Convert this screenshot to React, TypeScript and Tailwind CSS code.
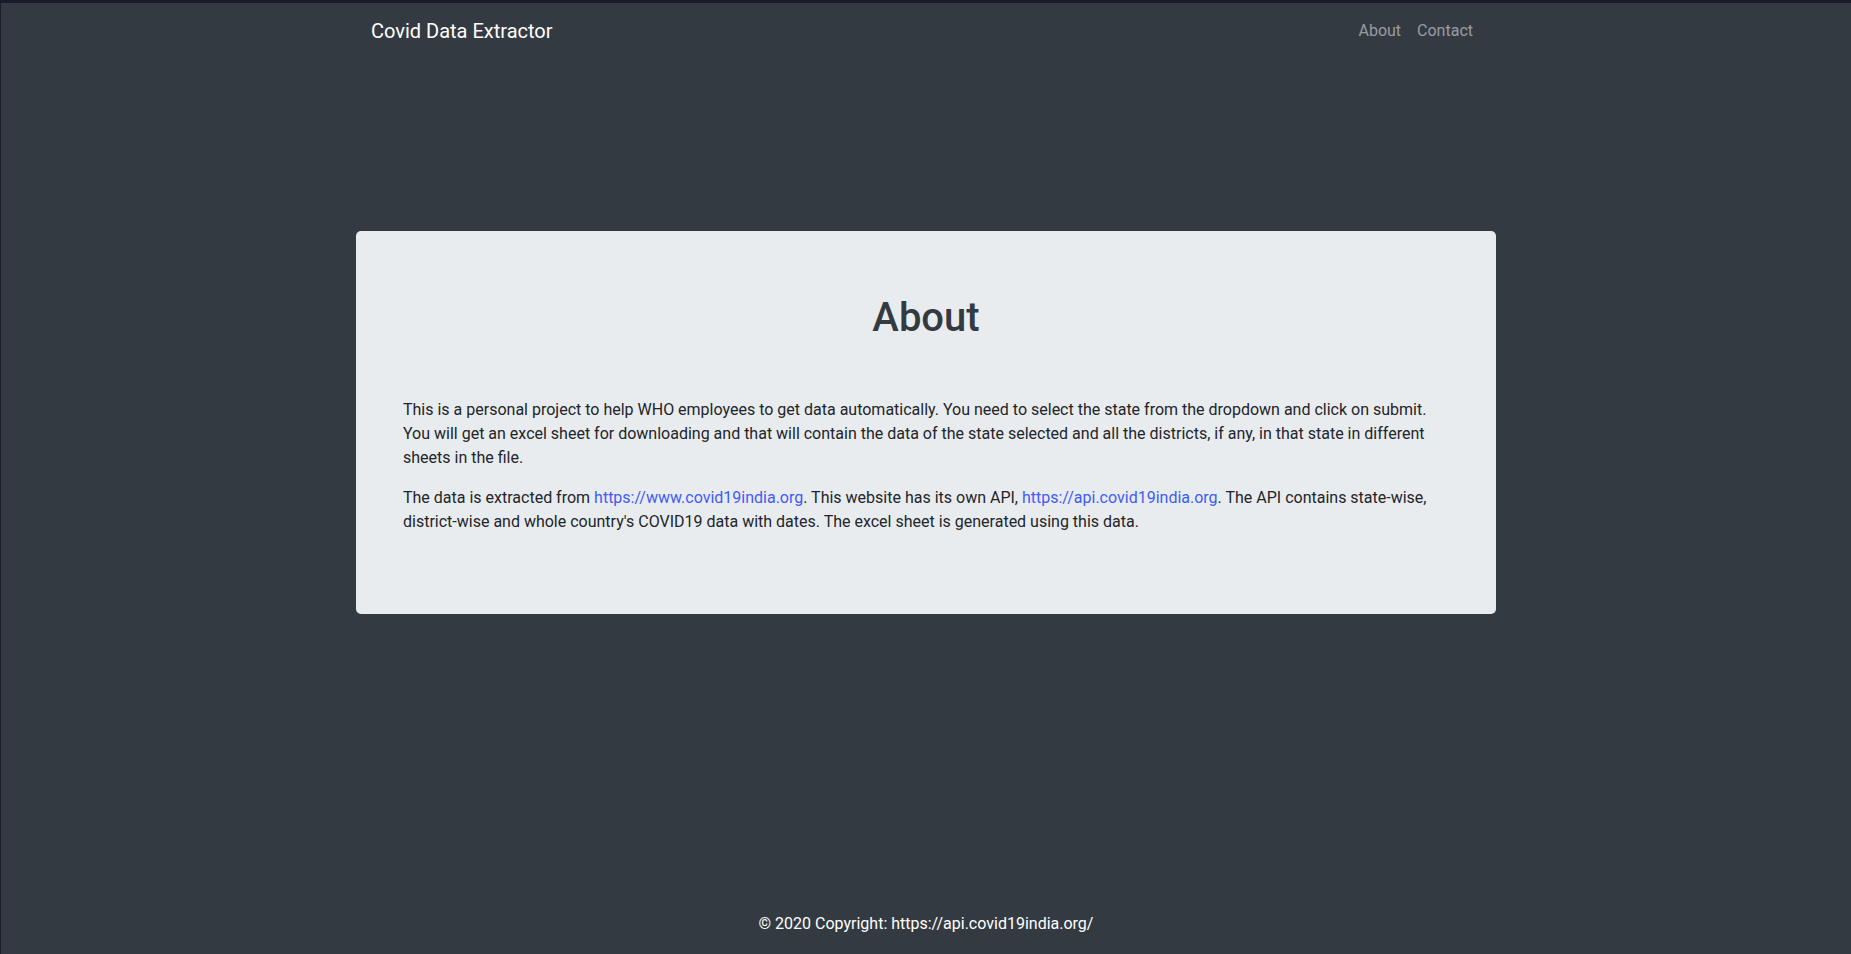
export default function App() {
  return (
    <div
      className="flex min-h-screen flex-col border-t-[3px] border-l border-[#1b1c2b] bg-[#333a42] text-[#212529]"
      style={{ fontFamily: "Roboto, 'Liberation Sans', sans-serif" }}
    >
      {/* Navbar */}
      <nav className="px-4 py-2">
        <div className="mx-auto flex w-full max-w-[1140px] items-center justify-between px-[15px]">
          <a href="#" className="py-[5px] text-[20px] leading-[30px] text-white">
            Covid Data Extractor
          </a>
          <div className="flex">
            <a href="#" className="px-2 py-2 text-base leading-6 text-white/50">
              About
            </a>
            <a href="#" className="px-2 py-2 text-base leading-6 text-white/50">
              Contact
            </a>
          </div>
        </div>
      </nav>

      {/* Jumbotron */}
      <main className="mt-[172px] px-[15px]">
        <div className="mx-auto w-full max-w-[1140px] rounded-[5px] bg-[#e9ecef] px-8 pt-[63px] pb-[64px]">
          <div className="px-[15px]">
            <h1 className="mb-[56px] text-center text-[40px] font-medium leading-[48px] text-[#343a40]">
              About
            </h1>
            <p className="mb-4 text-base leading-6">
              This is a personal project to help WHO employees to get data automatically. You need to select the state from the dropdown and click on submit. You will get an excel sheet for downloading and that will contain the data of the state selected and all the districts, if any, in that state in different sheets in the file.
            </p>
            <p className="mb-4 text-base leading-6">
              The data is extracted from{" "}
              <a href="#" className="text-[#3f5bf6]">https://www.covid19india.org</a>. This website has its own API,{" "}
              <a href="#" className="text-[#3f5bf6]">https://api.covid19india.org</a>. The API contains state-wise, district-wise and whole country's COVID19 data with dates. The excel sheet is generated using this data.
            </p>
          </div>
        </div>
      </main>

      {/* Footer */}
      <footer className="mt-auto pt-4 pb-[18px] text-center text-base leading-6 text-white">
        © 2020 Copyright: https://api.covid19india.org/
      </footer>
    </div>
  );
}
